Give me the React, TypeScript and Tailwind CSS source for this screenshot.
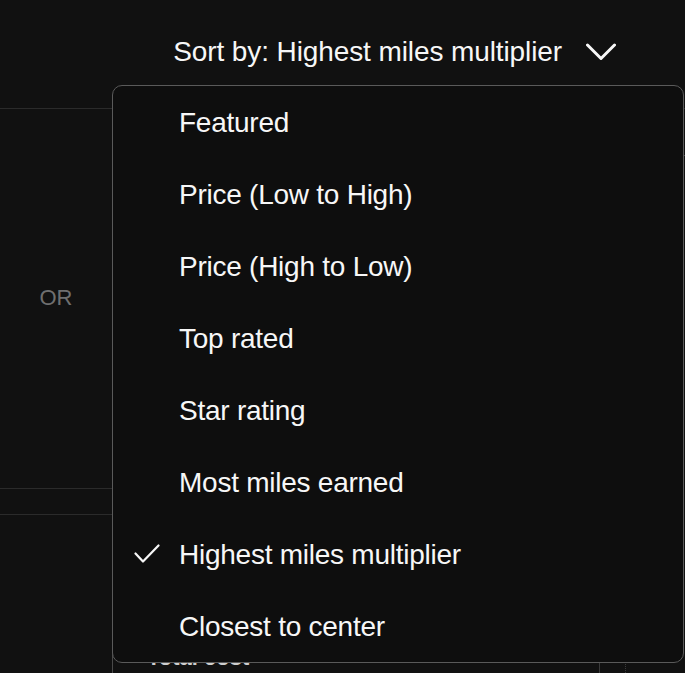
import React from "react";

const items = [
  "Featured",
  "Price (Low to High)",
  "Price (High to Low)",
  "Top rated",
  "Star rating",
  "Most miles earned",
  "Highest miles multiplier",
  "Closest to center",
];

export default function App() {
  const selected = "Highest miles multiplier";
  return (
    <div className="relative w-[685px] h-[673px] overflow-hidden bg-[#111111] font-['Liberation_Sans',Arial,sans-serif] text-[#f7f7f7]">
      {/* header */}
      <div className="h-[109px] border-b border-[#2b2b2b] flex items-center justify-end pr-[69px] pb-[4px]">
        <button className="flex items-center gap-[24px] text-[28px] leading-none tracking-[-0.1px] text-[#f7f7f7]">
          <span>Sort by: Highest miles multiplier</span>
          <svg width="30" height="18" viewBox="0 0 30 18" fill="none">
            <polyline points="1.5,2 15,15.5 28.5,2" stroke="#f7f7f7" strokeWidth="3" strokeLinecap="round" strokeLinejoin="round" />
          </svg>
        </button>
      </div>

      {/* body behind menu */}
      <div className="flex">
        <div className="w-[112px] flex flex-col">
          <div className="h-[380px] border-b border-[#2b2b2b] flex items-center justify-center pb-[2px]">
            <span className="text-[22px] text-[#6f6f6f] leading-none">OR</span>
          </div>
          <div className="h-[26px] border-b border-[#2b2b2b]" />
        </div>
        <div className="flex-1 mt-[46px] border-l border-t border-[#4a4a4a] rounded-tl-[10px] h-[518px] flex flex-col justify-end">
          <div className="flex h-[40px]">
            <div className="flex-1 pl-[34px] pt-[12px] text-[22px] leading-[26px] font-bold text-[#cfcfcf] whitespace-nowrap">Total cost</div>
            <div className="w-[26px] border-l border-[#3a3a3a]" />
            <div className="w-[60px] border-l border-dotted border-[#3a3a3a]" />
          </div>
        </div>
      </div>

      {/* dropdown menu */}
      <div className="absolute left-[112px] top-[85px] w-[572px] rounded-[10px] border border-[#5a5a5a] bg-[#0e0e0e]">
        {items.map((it) => (
          <div key={it} className="relative h-[72px] flex items-center pl-[66px] text-[28px] leading-none tracking-[-0.25px] text-[#f7f7f7]">
            {it === selected && (
              <svg className="absolute left-[21px] top-[26px]" width="26" height="20" viewBox="0 0 26 20" fill="none">
                <polyline points="1.5,9.5 9,17.5 24.5,1.5" stroke="#f7f7f7" strokeWidth="2.2" strokeLinecap="round" strokeLinejoin="round" />
              </svg>
            )}
            <span className="pt-[2px]">{it}</span>
          </div>
        ))}
      </div>
    </div>
  );
}
